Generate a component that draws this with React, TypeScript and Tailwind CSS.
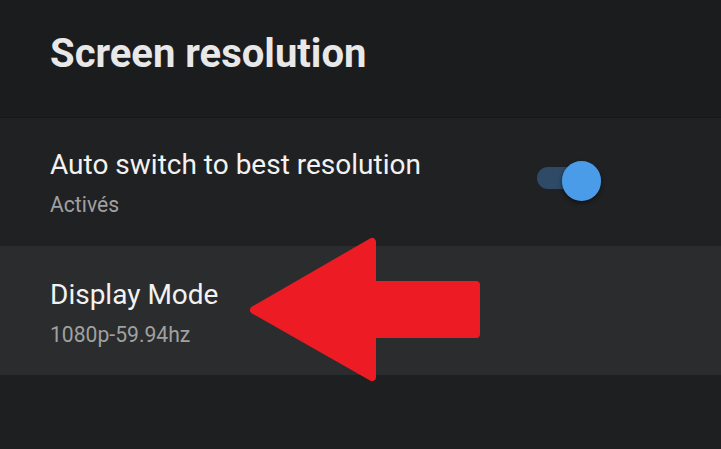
import React from 'react';

function Toggle() {
    return (
        <div className="relative h-[40px] w-[66px]">
            <div className="absolute left-0 top-[6px] h-[22px] w-[44px] rounded-full bg-[#2e4a66]" />
            <div className="absolute left-[25px] top-0 h-[40px] w-[39px] rounded-full bg-[#4a9be8] shadow-[0_2px_4px_rgba(0,0,0,0.5)]" />
        </div>
    );
}

function Arrow() {
    return (
        <svg className="pointer-events-none absolute left-0 top-0" width="721" height="449" viewBox="0 0 721 449">
            <path
                d="M254 310 L372 242 L372 285 L476 285 L476 334 L372 334 L372 377 Z"
                fill="#ed1c24"
                stroke="#ed1c24"
                strokeWidth="8"
                strokeLinejoin="round"
            />
        </svg>
    );
}

export default function App() {
    return (
        <div className="relative h-[449px] w-[721px] overflow-hidden bg-[#1e1f21] font-['Roboto',sans-serif]">
            <div className="h-[117px] bg-[#1b1c1e] pl-[50px] pt-[30px]">
                <h1 className="whitespace-nowrap text-[40px] font-bold leading-[48px] text-[#e8e8e8]">
                    Screen resolution
                </h1>
            </div>
            <div className="flex h-[129px] items-start justify-between border-t border-[#161719] bg-[#202123] pl-[50px] pr-[118px] pt-[29px]">
                <div className="flex flex-col gap-[8px]">
                    <span className="whitespace-nowrap text-[28px] leading-[36px] text-[#f2f2f2]">
                        Auto switch to best resolution
                    </span>
                    <span className="origin-left scale-x-[0.96] whitespace-nowrap text-[22px] leading-[28px] text-[#a0a0a0]">
                        Activés
                    </span>
                </div>
                <div className="pt-[14px]">
                    <Toggle />
                </div>
            </div>
            <div className="h-[129px] bg-[#2a2c2e] pl-[50px] pt-[31px]">
                <div className="flex flex-col gap-[8px]">
                    <span className="whitespace-nowrap text-[28px] leading-[36px] text-[#f2f2f2]">
                        Display Mode
                    </span>
                    <span className="origin-left scale-x-[0.96] whitespace-nowrap text-[22px] leading-[28px] text-[#a0a0a0]">
                        1080p-59.94hz
                    </span>
                </div>
            </div>
            <Arrow />
        </div>
    );
}
